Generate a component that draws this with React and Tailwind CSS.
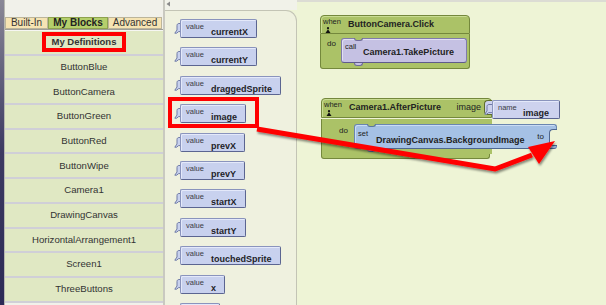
import React from 'react';

const components = [
  'ButtonBlue',
  'ButtonCamera',
  'ButtonGreen',
  'ButtonRed',
  'ButtonWipe',
  'Camera1',
  'DrawingCanvas',
  'HorizontalArrangement1',
  'Screen1',
  'ThreeButtons',
];

const getters = ['currentX', 'currentY', 'draggedSprite', 'image', 'prevX', 'prevY', 'startX', 'startY', 'touchedSprite', 'x'];

// little hook on the left of a value block
function Plug({ fill, stroke, className }) {
  return (
    <svg width="9" height="13" viewBox="0 0 9 13" className={className}>
      <path d="M8.5 1.5H5C3.8 1.5 3 2.3 3 3.5V8L0.8 11.2H2.6L4.6 9.6H8.5" fill={fill} stroke={stroke} strokeWidth="1" />
    </svg>
  );
}

function WhenLabel() {
  return (
    <div className="flex w-[27px] shrink-0 flex-col items-start pl-[2px] pt-[1px]">
      <span className="text-[7.5px] leading-[9px]">when</span>
      <svg width="6" height="6" viewBox="0 0 6 6" className="ml-[2px] mt-[1px]">
        <circle cx="3" cy="1.2" r="1.1" fill="#111" />
        <path d="M0.5 6L3 2.3L5.5 6Z" fill="#111" />
      </svg>
    </div>
  );
}

function ValueBlock({ label = 'value', name, bg = 'bg-[#c8d1ee]', fill = '#c8d1ee', className = '' }) {
  return (
    <div className={`relative flex h-[19px] shrink-0 self-start ${className}`}>
      <Plug className="absolute left-0 top-[3px]" fill={fill} stroke="#6f7aa6" />
      <div className={`relative ml-[6px] flex h-full items-start rounded-[2px] border border-[#8a94bd] border-b-[#5b6591] border-r-[#5b6591] ${bg} pl-[5px] pr-[8px] shadow-[inset_1px_1px_0_#e4e9fa]`}>
        <span className="w-[25px] shrink-0 pt-[2px] text-[7.5px] leading-[9px] text-[#3a3a44]">{label}</span>
        {name && <span className="pt-[7px] text-[9px] font-bold leading-[10px] text-[#1e1e28]">{name}</span>}
      </div>
    </div>
  );
}

function Notches({ border, bg }) {
  return (
    <>
      <div className={`absolute left-[12px] top-[-1px] h-[3px] w-[9px] rounded-b-[3px] border border-t-0 ${border} bg-[#abc267]`} />
      <div className={`absolute bottom-[-4px] left-[12px] h-[3px] w-[9px] rounded-b-[3px] border border-t-0 ${border} ${bg}`} />
    </>
  );
}

export default function App() {
  return (
    <div className="relative flex h-[305px] w-[606px] overflow-hidden bg-[#eef4d6] font-['Liberation_Sans',Arial,sans-serif] text-[#222]">
      {/* desktop edge */}
      <div className="w-[4px] shrink-0 bg-gradient-to-b from-[#8a8896] via-[#3d3a62] to-[#2c2a56]" />

      {/* palette */}
      <div className="flex w-[161px] shrink-0 flex-col border-l border-r-2 border-l-[#b8b8b0] border-r-[#c9c9c0] bg-[#f1f1ea]">
        <div className="h-[17px] shrink-0" />
        <div className="flex h-[12px] shrink-0 text-[10px] leading-[10px]">
          <div className="flex w-[43px] items-center justify-center border border-[#bcb59a] bg-[#f6e4b3] text-[#333]">Built-In</div>
          <div className="flex w-[60px] items-center justify-center border border-[#8ea24e] bg-[#b5cf6b] font-bold text-[#222]">My Blocks</div>
          <div className="flex w-[54px] items-center justify-center border border-[#bcb59a] bg-[#f6e4b3] text-[#333]">Advanced</div>
        </div>
        <div className="h-[2px] shrink-0 border-t border-[#9d9d96] bg-[#f6f6f2]" />
        <div className="flex flex-col">
          <div className="flex h-[24.7px] shrink-0 items-center justify-center border-b-2 border-[#d0cfd7] bg-[#e0e8c3]">
            <span className="inline-block border-4 border-[#ff0000] px-[6px] text-[9.5px] font-bold leading-[12px] text-[#333]">My Definitions</span>
          </div>
          {components.map((c) => (
            <div key={c} className="flex h-[24.7px] shrink-0 items-center justify-center border-b-2 border-[#d0cfd7] bg-[#e0e8c3] text-[9.6px] text-[#333]">
              {c}
            </div>
          ))}
        </div>
      </div>

      {/* drawer */}
      <div className="flex w-[132px] shrink-0 flex-col">
        <div className="flex h-[10px] shrink-0 flex-col gap-[2px] bg-[#f1f2e9] pl-[1px] pt-[1px]">
          <svg width="5" height="6" viewBox="0 0 5 6">
            <path d="M4 0.5L0.5 3L4 5.5Z" fill="#8a8a8a" />
          </svg>
        </div>
        <div className="flex flex-1 flex-col gap-[9.4px] rounded-tr-[11px] border-r border-t border-[#c3c4b5] bg-[#eff1df] pl-[9px] pt-[8px]">
          {getters.map((g) => (
            <ValueBlock key={g} name={g} />
          ))}
          <ValueBlock label="" />
        </div>
      </div>

      {/* workspace */}
      <div className="relative flex-1 border-t-2 border-[#dcdcd4]">
        {/* when ButtonCamera.Click */}
        <div className="absolute left-[23px] top-[13px] flex w-[150px] flex-col">
          <div className="flex h-[19px] items-start rounded-t-[4px] border border-[#74883c] bg-[#abc267] shadow-[inset_1px_1px_0_#c9dc92]">
            <WhenLabel />
            <span className="pt-[3px] text-[9px] font-bold leading-[10px]">ButtonCamera.Click</span>
          </div>
          <div className="flex h-[29px] border-x border-[#74883c] bg-[#abc267]">
            <div className="w-[20px] shrink-0 pl-[6px] pt-[5px] text-[8px] leading-[9px]">do</div>
            <div className="relative mt-[4px] flex h-[25px] w-[126px] shrink-0 items-start rounded-[3px] border border-[#7f7bab] border-b-[#5f5b8d] bg-[#c5c1e3] shadow-[inset_1px_1px_0_#e2dff4]">
              <Notches border="border-[#6f6b9b]" bg="bg-[#c5c1e3]" />
              <span className="w-[21px] shrink-0 pl-[3px] pt-[3px] text-[7.5px] leading-[9px]">call</span>
              <span className="pt-[8px] text-[9px] font-bold leading-[10px]">Camera1.TakePicture</span>
            </div>
          </div>
          <div className="h-[6px] rounded-b-[3px] border-x border-b border-[#74883c] bg-[#abc267]" />
        </div>

        {/* when Camera1.AfterPicture */}
        <div className="absolute left-[24px] top-[96px] flex flex-col items-start">
          <div className="flex items-start">
            <div className="flex h-[20px] w-[171px] shrink-0 items-start rounded-t-[4px] border border-[#74883c] bg-[#abc267] shadow-[inset_1px_1px_0_#c9dc92]">
              <WhenLabel />
              <span className="pt-[3px] text-[9px] font-bold leading-[10px]">Camera1.AfterPicture</span>
              <span className="ml-auto pt-[3px] text-[9px] leading-[10px]">image</span>
              <div className="-mr-px ml-[3px] mt-[1px] h-[15px] w-[8px] shrink-0 rounded-l-[4px] border border-r-0 border-[#5d6c2c] bg-[#cdd2ee]" />
            </div>
            <ValueBlock label="name" name="image" bg="bg-[#cdd2ee]" fill="#cdd2ee" className="-ml-[8px] mt-[2px] [&>div]:ml-[8px] [&>div]:pr-[10px]" />
          </div>
          <div className="flex h-[35px] w-[171px] border-l border-[#74883c] bg-[#abc267]">
            <div className="w-[32px] shrink-0 pl-[17px] pt-[7px] text-[8px] leading-[9px]">do</div>
            <div className="relative mt-[5px] flex h-[25px] w-[203px] shrink-0 items-start rounded-[3px] border border-[#6a86b0] border-b-[#4d6690] bg-[#a5c1e5] shadow-[inset_1px_1px_0_#cadcf4]">
              <Notches border="border-[#5a76a0]" bg="bg-[#a5c1e5]" />
              <span className="w-[21px] shrink-0 pl-[3px] pt-[4px] text-[7.5px] leading-[9px]">set</span>
              <span className="pt-[10px] text-[9px] font-bold leading-[10px]">DrawingCanvas.BackgroundImage</span>
              <span className="ml-auto pt-[7px] text-[8px] leading-[9px]">to</span>
              <div className="-mr-px ml-[5px] mt-[4px] h-[17px] w-[8px] shrink-0 rounded-l-[4px] border border-r-0 border-[#4d6690] bg-[#eef4d6]" />
            </div>
          </div>
          <div className="h-[5px] w-[169px] rounded-b-[3px] border-x border-b border-[#74883c] bg-[#abc267]" />
        </div>
      </div>

      {/* annotations */}
      <div className="pointer-events-none absolute left-[168px] top-[97px] h-[31px] w-[91px] border-4 border-[#ff0000]" />
      <svg width="606" height="305" viewBox="0 0 606 305" className="pointer-events-none absolute left-0 top-0">
        <defs>
          <filter id="sh" x="-10%" y="-10%" width="120%" height="140%">
            <feDropShadow dx="1" dy="2" stdDeviation="1.2" floodColor="#000" floodOpacity="0.45" />
          </filter>
        </defs>
        <g filter="url(#sh)">
          <polyline points="257,129 495,169 532,155" fill="none" stroke="#ff0000" strokeWidth="5" strokeLinejoin="miter" />
          <polygon points="555,141 528,147 539,164" fill="#ff0000" />
        </g>
      </svg>
    </div>
  );
}
